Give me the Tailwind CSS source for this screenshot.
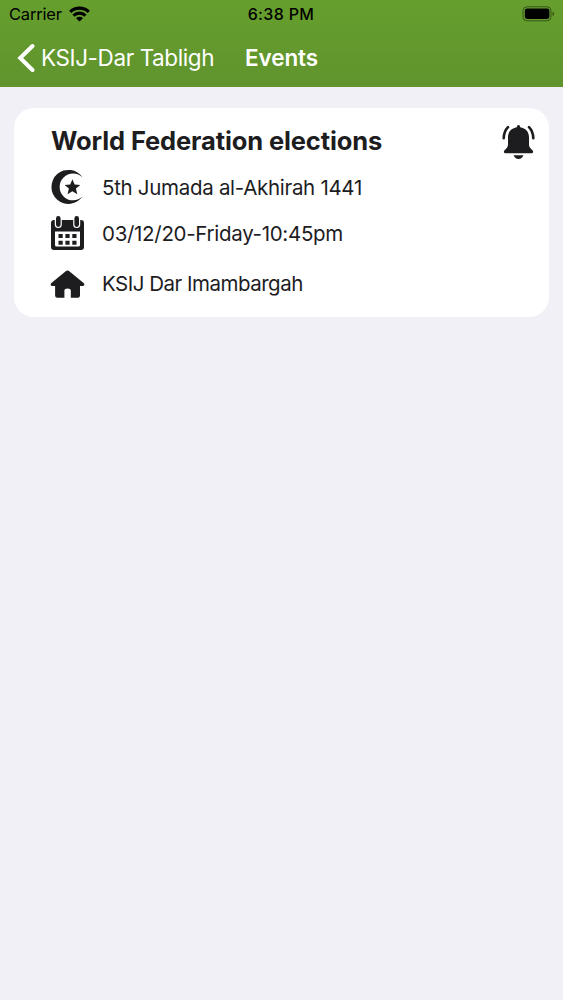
<!DOCTYPE html>
<html lang="en">
<head>
<meta charset="utf-8">
<title>Events</title>
<script src="https://cdn.jsdelivr.net/npm/@tailwindcss/browser@4"></script>
</head>
<body class="min-h-screen bg-[#f1f0f7] font-['Inter',sans-serif] text-[#1d1d1f]">
<header class="h-[87px] bg-linear-to-b from-[#669f2e] to-[#60932d]">
  <div class="grid h-[28px] grid-cols-3 items-center pr-[8px] pl-[9px] text-[16px] leading-none text-black">
    <div class="flex items-center gap-[7px]">
      <span class="text-[16.5px] tracking-[-0.2px]">Carrier</span>
      <svg class="h-[16px] w-[21px]" viewBox="0 0 21 16" fill="none" stroke="black" stroke-width="3.2">
        <path d="M1.2 5.8C6.5 .9 14.5 .9 19.8 5.8"/>
        <path d="M4.5 9.6C8 6.3 13 6.3 16.5 9.6"/>
        <path d="M10.5 15.4L7 12.2C9 10.4 12 10.4 14 12.2Z" fill="black" stroke="none"/>
      </svg>
    </div>
    <div class="-ml-[2px] text-center font-medium tracking-[0.35px] whitespace-nowrap">6:38 PM</div>
    <svg class="h-[16px] w-[33px] justify-self-end" viewBox="0 0 33 16">
      <rect x="1" y="0.8" width="28" height="14" rx="4" fill="none" stroke="black" stroke-opacity=".45"/>
      <rect x="2.8" y="2.6" width="24.6" height="10.4" rx="2.4"/>
      <path d="M30.6 5.4Q32.2 6.3 32.2 7.8T30.6 10.2Z" opacity=".5"/>
    </svg>
  </div>
  <div class="flex h-[59px] items-center pl-[17px] text-[22.5px] leading-none whitespace-nowrap text-white">
    <svg class="h-[30px] w-[18px]" viewBox="0 0 18 30" fill="none" stroke="white" stroke-width="4" stroke-linecap="round" stroke-linejoin="miter"><path d="M15.5 3L3.2 15L15.5 27"/></svg>
    <span class="mt-[2px] ml-[6px] w-[204px] tracking-[-0.4px]">KSIJ-Dar Tabligh</span>
    <h1 class="mt-[2px] font-semibold tracking-[-0.1px]">Events</h1>
  </div>
</header>
<main class="pt-[21px] pr-[14px] pl-[14px]">
  <article class="flex h-[209px] rounded-[20px] bg-white pr-[14px] pl-[36px]">
    <div class="flex-1 whitespace-nowrap">
      <h2 class="mt-[17px] ml-[1px] h-[32px] text-[25.5px] leading-[32px] font-bold tracking-[-0.12px]">World Federation elections</h2>
      <div class="mt-[6px] flex h-[48px] items-center text-[20.5px]">
        <svg class="h-[36px] w-[36px]" viewBox="0 0 36 36" fill="#1d1d1f"><path d="M32.6 8.5A17 17 0 1 0 32.6 27.3A13.4 13.4 0 1 1 32.6 8.5Z"/><path d="M22.4 10.2L24.6 15.6L30.3 16L25.9 19.6L27.3 25.2L22.4 22.2L17.5 25.2L18.9 19.6L14.6 16L20.2 15.6Z"/></svg>
        <span class="mt-[2px] ml-[16px] tracking-[-0.3px]">5th Jumada al-Akhirah 1441</span>
      </div>
      <div class="flex h-[45px] items-center text-[20.5px]">
        <svg class="-mt-px h-[36px] w-[36px]" viewBox="0 0 36 36"><path fill="#1d1d1f" fill-rule="evenodd" d="M4 5H31Q34 5 34 8V32Q34 35 31 35H4Q1 35 1 32V8Q1 5 4 5ZM5 16.5V30Q5 31.5 6.5 31.5H28.5Q30 31.5 30 30V16.5Z"/><path stroke="white" stroke-width="7" stroke-linecap="round" d="M8.3 3V9.6M26.7 3V9.6"/><path stroke="#1d1d1f" stroke-width="4.6" stroke-linecap="round" d="M8.3 3.4V9.6M26.7 3.4V9.6"/><path fill="#1d1d1f" d="M8.5 19h4.2v4h-4.2zM15.4 19h4.2v4h-4.2zM22.3 19h4.2v4h-4.2zM8.5 25.7h4.2v4h-4.2zM15.4 25.7h4.2v4h-4.2zM22.3 25.7h4.2v4h-4.2z"/></svg>
        <span class="mt-[2px] ml-[16px] tracking-[-0.3px]">03/12/20-Friday-10:45pm</span>
      </div>
      <div class="flex h-[55px] items-center text-[20.5px]">
        <svg class="h-[28px] w-[36px]" viewBox="0 0 36 28"><path fill="#1d1d1f" d="M15.7 1.3Q17.5 -.1 19.3 1.3L33.9 13.3Q35.1 15.5 33 16H30V25.5Q30 27.7 27.8 27.7H20.8V20.5Q20.8 18.4 17.6 18.4T14.4 20.5V27.7H7.3Q5.1 27.7 5.1 25.5V16H2Q-.1 15.5 1.1 13.3Z"/></svg>
        <span class="mt-[2px] ml-[16px] tracking-[-0.5px]">KSIJ Dar Imambargah</span>
      </div>
    </div>
    <svg class="mt-[17px] h-[35px] w-[33px] shrink-0" viewBox="0 0 33 35" fill="#1d1d1f"><path d="M16.5 0Q18.1 0 18.2 2.2C23.5 3 27 6.8 27 12V19.5C27 22 28.5 23.5 30.7 25.4Q32 28.2 29.8 28.2H3.2Q1 28.2 2.3 25.4C4.5 23.5 6 22 6 19.5V12C6 6.8 9.5 3 14.8 2.2Q14.9 0 16.5 0Z"/><path d="M11.5 30.3H21.5Q20 34 16.5 34T11.5 30.3Z"/><path fill="none" stroke="#1d1d1f" stroke-width="2.6" stroke-linecap="round" d="M6 2.2Q1.9 6.4 1.7 13.2M27 2.2Q31.1 6.4 31.3 13.2"/></svg>
  </article>
</main>
</body>
</html>
